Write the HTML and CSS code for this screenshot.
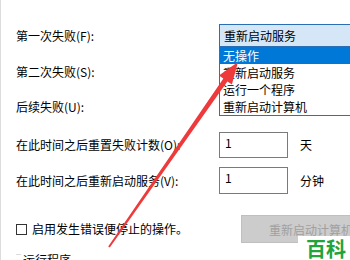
FILE: index.html
```html
<!DOCTYPE html>
<html>
<head>
    <title>恢复</title>
    <link rel="stylesheet" href="styles.css">
</head>
<body>
    <div class="page">
        <div class="row row-first">
            <span class="label">第一次失败(F):</span>
            <div class="combo">
                <div class="combo-value">重新启动服务</div>
                <ul class="combo-list">
                    <li class="selected">无操作</li>
                    <li>重新启动服务</li>
                    <li>运行一个程序</li>
                    <li>重新启动计算机</li>
                </ul>
            </div>
        </div>
        <div class="row row-second">
            <span class="label">第二次失败(S):</span>
        </div>
        <div class="row row-third">
            <span class="label">后续失败(U):</span>
        </div>
        <div class="row row-reset">
            <span class="label">在此时间之后重置失败计数(O):</span>
            <div class="field">1</div>
            <span class="unit">天</span>
        </div>
        <div class="row row-restart">
            <span class="label">在此时间之后重新启动服务(V):</span>
            <div class="field">1</div>
            <span class="unit">分钟</span>
        </div>
        <div class="row row-check">
            <label class="check"><span class="box"></span>启用发生错误便停止的操作。</label>
            <button class="btn" disabled>重新启动计算机</button>
        </div>
        <div class="group">
            <span class="group-title">运行程序</span>
        </div>

        <!-- annotation arrow -->
        <svg class="arrow" width="350" height="260" viewBox="0 0 350 260">
            <polygon fill="#ee3a3a" points="108.2,246.4 223.4,78.6 218.9,75.4 238,62 231.9,84.6 227.4,81.4 109.8,247.6"/>
        </svg>
        <div class="logo">百科</div>
    </div>
</body>
</html>
```

FILE: styles.css
```css
html, body {
    margin: 0;
    padding: 0;
}

body {
    width: 350px;
    height: 260px;
    overflow: hidden;
    background: #fff;
    font-family: "Noto Sans CJK SC", "Microsoft YaHei", sans-serif;
    font-size: 12px;
    color: #000;
}

.page {
    position: relative;
    height: 260px;
    padding-top: 24px;
    box-sizing: border-box;
    border-left: 1px solid #dcdcdc;
    overflow: hidden;
}

.row {
    display: grid;
    grid-template-columns: 191px 69px auto;
    column-gap: 12px;
    align-items: center;
    padding-left: 15px;
}

.label {
    line-height: 16px;
    white-space: nowrap;
}

.row-first { height: 23px; }
.row-second { height: 24px; margin-top: 13px; }
.row-third { height: 24px; margin-top: 11px; }
.row-reset { height: 26px; margin-top: 13px; }
.row-restart { height: 27px; margin-top: 9px; }

.row-check {
    height: 28px;
    margin-top: 21px;
    grid-template-columns: 225px auto;
    column-gap: 0;
}

/* combo box with open list */
.combo {
    position: relative;
    width: 150px;
    height: 23px;
    grid-column: 2 / 4;
}

.combo-value {
    height: 21px;
    line-height: 21px;
    padding-left: 4px;
    background: #d5e7f7;
    border: 1px solid #2a6fb4;
}

.combo-list {
    position: absolute;
    top: 23px;
    left: 0;
    width: 148px;
    margin: 0;
    padding: 0;
    list-style: none;
    background: #fff;
    border: 1px solid #646464;
    border-top: none;
    z-index: 2;
}

.combo-list li {
    height: 17px;
    line-height: 17px;
    padding-left: 3px;
}

.combo-list .selected {
    background: #0078d7;
    color: #fff;
}

.field {
    height: 24px;
    border: 1px solid #7a7a7a;
    padding-left: 5px;
    line-height: 20px;
    box-sizing: content-box;
    width: 62px;
}

.row-restart .field {
    height: 25px;
}

.unit {
    line-height: 16px;
}

.check {
    display: flex;
    align-items: center;
    gap: 5px;
    line-height: 16px;
    white-space: nowrap;
}

.box {
    width: 9px;
    height: 9px;
    border: 1px solid #333;
    background: #fff;
}

.btn {
    width: 140px;
    height: 28px;
    padding: 0;
    font: inherit;
    background: #cccccc;
    border: 1px solid #bfbfbf;
    color: #a0a0a0;
}

.group {
    margin: 11px 0 0 15px;
    border-top: 1px solid #dcdcdc;
    width: 6px;
    position: relative;
}

.group-title {
    position: absolute;
    left: 5px;
    top: -4px;
    white-space: nowrap;
    background: #fff;
    padding: 0 2px;
}

.arrow {
    position: absolute;
    left: -1px;
    top: 0;
    z-index: 3;
}

.logo {
    position: absolute;
    left: 297px;
    top: 236px;
    width: 60px;
    height: 30px;
    padding-left: 8px;
    background: #fff;
    color: #22a33b;
    font-size: 20px;
    font-weight: bold;
    line-height: 26px;
    z-index: 4;
}
```
